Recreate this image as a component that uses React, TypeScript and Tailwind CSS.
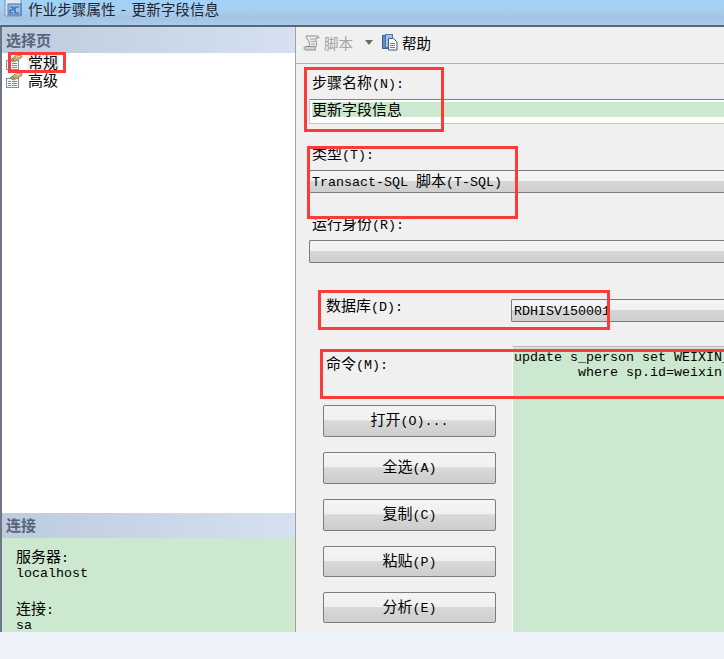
import React from "react";

const Mix = ({ text }: { text: string }) => {
  const runs = text.match(/[\u4e00-\u9fff]+|[^\u4e00-\u9fff]+/g) ?? [];
  return (
    <span className="block leading-[15px] pb-[2px] font-['Noto_Sans_CJK_SC',sans-serif] text-[15px]">
      {runs.map((r, i) =>
        /[\u4e00-\u9fff]/.test(r) ? (
          <span key={i}>{r}</span>
        ) : (
          <span key={i} className="font-['Liberation_Mono',monospace] text-[13.33px]">{r}</span>
        )
      )}
    </span>
  );
};

const Label = ({ text, className }: { text: string; className?: string }) => (
  <div className={`flex items-center shrink-0 text-black whitespace-pre ${className ?? "h-[18px]"}`}><Mix text={text} /></div>
);

const Combo = ({ text, className }: { text?: string; className?: string }) => (
  <div className={`h-[23px] shrink-0 flex items-center pl-[2px] border border-[#7c7c7c] rounded-l-[2px] border-r-0 bg-[linear-gradient(to_bottom,#f4f4f4_0%,#f1f1f1_48%,#d6d6d6_50%,#cfcfcf_100%)] whitespace-pre overflow-hidden ${className ?? ""}`}>
    {text ? <Mix text={text} /> : null}
  </div>
);

const Btn = ({ text, h }: { text: string; h: string }) => (
  <div className={`w-[173px] ${h} shrink-0 flex items-center justify-center border border-[#7c7c7c] rounded-[2px] bg-[linear-gradient(to_bottom,#f4f4f4_0%,#f0f0f0_47%,#d9d9d9_49%,#cdcdcd_100%)] whitespace-pre`}>
    <Mix text={text} />
  </div>
);

const PageIcon = () => (
  <svg width="17" height="15" viewBox="0 0 17 15" className="shrink-0">
    <rect x="0.500" y="5.500" width="12" height="9" fill="#f6f8fc" stroke="#7d8ea6" />
    <path d="M2 8.500h3M6 8.500h5M2 10.500h3M6 10.500h5M2 12.500h3M6 12.500h5" stroke="#5f8fca" />
    <path d="M4 5 L9 1 L15 0 L16.500 2 L12 5 L8 7 Z" fill="#c9a868" stroke="#8a7850" strokeWidth="0.600" />
    <path d="M4 4 L7 7 M6 3 L9 6" stroke="#6b6b6b" />
    <path d="M10 2 L14 1.500" stroke="#f1dfa8" />
  </svg>
);

const RedBox = ({ className }: { className: string }) => (
  <div className={`absolute border-[3px] border-[#fb3a3a] pointer-events-none ${className}`} />
);

const HeaderBar = ({ text, className }: { text: string; className?: string }) => (
  <div className={`pl-[4px] flex items-center font-['Noto_Sans_CJK_SC',sans-serif] font-bold text-[15px] text-[#56667a] bg-[linear-gradient(to_right,#bccbde,#d5e1f0)] ${className ?? ""}`}>
    {text}
  </div>
);

export default function App() {
  return (
    <div className="relative w-[724px] h-[659px] overflow-hidden bg-[#eef2fa]">
      <div className="h-[632px] flex flex-col overflow-hidden">
        {/* title bar */}
        <div className="h-[27px] shrink-0 flex items-start pl-[3px] bg-[linear-gradient(to_bottom,#9fd2f9_0%,#a9cfef_35%,#a4c4e4_75%,#a9cbec_100%)] border-b-2 border-[#5d6670]">
          <svg width="20" height="18" viewBox="0 0 20 18" className="shrink-0">
            <rect x="2" y="-2" width="16" height="18" rx="1" fill="#dfe9f4" stroke="#7a8ea8" />
            <rect x="5" y="4" width="13" height="11" fill="#9fc0e2" stroke="#3f6fa8" />
            <path d="M7 7h3v3H7v3h3M12 7h4M12 7v6h4" stroke="#1e5fa8" strokeWidth="1.200" fill="none" />
          </svg>
          <div className="ml-[5px] font-['Noto_Sans_CJK_SC',sans-serif] text-[14.6px] leading-[18px] text-[#1b2530] flex">
            <span>作业步骤属性</span>
            <span className="w-[16px] text-center">-</span>
            <span>更新字段信息</span>
          </div>
        </div>

        <div className="flex-1 flex min-h-0 bg-white">
          {/* left pane */}
          <div className="w-[296px] shrink-0 flex flex-col border-l-2 border-r border-l-[#6d7684] border-r-[#a0a0a0]">
            <HeaderBar text="选择页" className="h-[26px] shrink-0" />
            <div className="flex-1 bg-white pl-[4px]">
              <div className="flex items-center h-[18px] gap-[4px]"><PageIcon /><Label text="常规" className="h-[18px] bg-[#efefef] px-[1px]" /></div>
              <div className="flex items-center h-[18px] gap-[4px]"><PageIcon /><Label text="高级" className="h-[16px] px-[1px]" /></div>
            </div>
            <HeaderBar text="连接" className="h-[25px] shrink-0" />
            <div className="h-[94px] shrink-0 bg-[#cce8cf] pl-[14px] pt-[12px] overflow-hidden">
              <Label text="服务器:" className="h-[15px]" />
              <Label text="localhost" className="h-[15px]" />
              <Label text="连接:" className="h-[15px] mt-[22px]" />
              <Label text="sa" className="h-[15px]" />
            </div>
          </div>

          {/* right pane */}
          <div className="flex-1 min-w-0 flex flex-col bg-[#f0f0f0]">
            <div className="h-[37px] shrink-0 flex items-center pl-[7px] pb-[5px] border-b border-[#b0b0b0]">
              <svg width="17" height="16" viewBox="0 0 17 16" className="shrink-0">
                <path d="M3 1h11c1 0 2 .5 2 2h-3c-.5 2 .5 4 .5 6s-.5 3-1 3H6c.5-1 .5-3 0-5S3 3 3 1Z" fill="#ececec" stroke="#8f8f8f" />
                <path d="M1 13c0-1 1-1.500 2-1.500h9.500c-.5 1-.5 3 .5 3.500H3c-1 0-2-1-2-2Z" fill="#cfd3d8" stroke="#8a8f98" />
                <path d="M7 4h5M7.500 6.500h4.500M8 9h4" stroke="#a8a8a8" />
              </svg>
              <div className="ml-[4px] font-['Noto_Sans_CJK_SC',sans-serif] text-[14.5px] text-[#a3a3a3]">脚本</div>
              <div className="ml-[12px] w-0 h-0 border-l-[4px] border-r-[4px] border-t-[5px] border-l-transparent border-r-transparent border-t-[#6a6a6a]" />
              <svg width="17" height="17" viewBox="0 0 17 17" className="ml-[9px] shrink-0">
                <rect x="0.500" y="1.500" width="7" height="13" fill="#5f8fc6" stroke="#3c659a" />
                <rect x="3.500" y="0.500" width="7" height="13" fill="#a4c4e6" stroke="#4c75a8" />
                <path d="M6.500 4.500h5l3.500 3.500v8h-8.500Z" fill="#f8f8f8" stroke="#4a5d75" />
                <path d="M8 9.500h5M8 11.500h5M8 13.500h5" stroke="#6f8098" />
              </svg>
              <div className="ml-[3px] font-['Noto_Sans_CJK_SC',sans-serif] text-[14.5px] text-black">帮助</div>
            </div>

            <div className="flex-1 min-h-0 flex flex-col pl-[13px]">
              <Label text="步骤名称(N):" className="h-[18px] mt-[11px] ml-[3px]" />
              <div className="mt-[6px] h-[25px] shrink-0 bg-white border border-[#b9cce6] border-t-[#5d87b8] border-r-0 rounded-l-[1px] pt-[2px] pl-[2px]">
                <div className="h-[15px] bg-[#cce8cf] flex items-center whitespace-pre"><Mix text="更新字段信息" /></div>
              </div>

              <Label text="类型(T):" className="h-[18px] mt-[22px] ml-[3px]" />
              <Combo text="Transact-SQL 脚本(T-SQL)" className="mt-[6px]" />

              <Label text="运行身份(R):" className="h-[18px] mt-[23px] ml-[3px]" />
              <Combo className="mt-[6px]" />

              <div className="mt-[36px] flex items-start h-[23px] shrink-0">
                <Label text="数据库(D):" className="h-[18px] ml-[17px] w-[185px] mt-[-1px]" />
                <Combo text="RDHISV150001" className="flex-1" />
              </div>

              <div className="mt-[24px] flex-1 min-h-0 flex">
                <div className="w-[203px] shrink-0 pl-[14px] flex flex-col">
                  <Label text="命令(M):" className="h-[18px] ml-[3px] mt-[10px]" />
                  <div className="mt-[31px] flex flex-col gap-[15px]">
                    <Btn text="打开(O)..." h="h-[32px]" />
                    <Btn text="全选(A)" h="h-[32px]" />
                    <Btn text="复制(C)" h="h-[32px]" />
                    <Btn text="粘贴(P)" h="h-[31px]" />
                    <Btn text="分析(E)" h="h-[31px]" />
                  </div>
                </div>
                <div className="flex-1 min-w-0 bg-[#cce8cf] border-t border-l border-[#fafafa] border-t-[#b8b8b8] pl-[1px] pt-[3px] overflow-hidden whitespace-pre font-['Liberation_Mono',monospace] text-[13.33px] leading-[15px] text-black">
                  <div>update s_person set WEIXIN_</div>
                  <div>        where sp.id=weixin</div>
                </div>
              </div>
            </div>
          </div>
        </div>
      </div>

      <RedBox className="left-[8px] top-[52px] w-[58px] h-[21px]" />
      <RedBox className="left-[304px] top-[67px] w-[140px] h-[65px]" />
      <RedBox className="left-[307px] top-[146px] w-[211px] h-[73px]" />
      <RedBox className="left-[318px] top-[290px] w-[292px] h-[40px]" />
      <RedBox className="left-[320px] top-[349px] w-[420px] h-[50px]" />
    </div>
  );
}
